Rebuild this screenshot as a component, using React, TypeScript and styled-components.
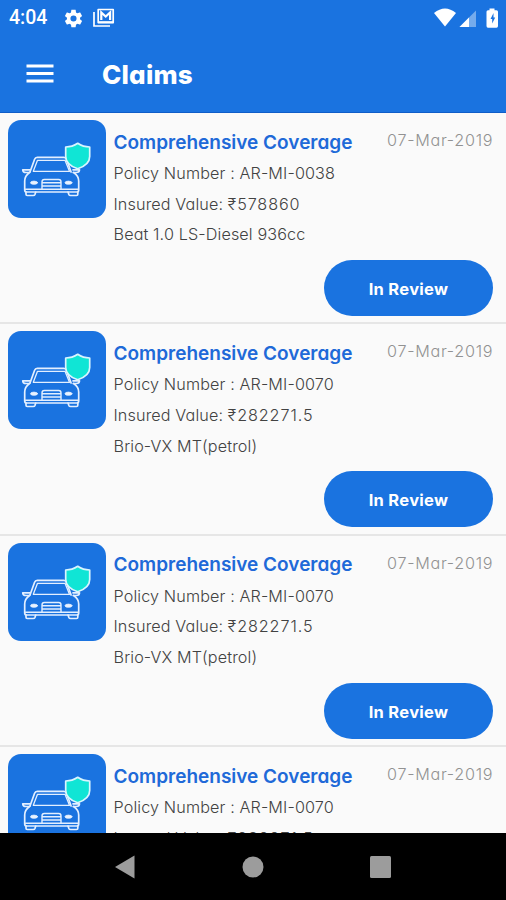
import React from "react";
import styled, { createGlobalStyle } from "styled-components";

const BLUE = "#1a73e0";

const GlobalStyle = createGlobalStyle`
  * { box-sizing: border-box; }
  body { margin: 0; background: #fafafa; }
`;

const Screen = styled.div`
  width: 506px;
  height: 900px;
  display: flex;
  flex-direction: column;
  overflow: hidden;
  background: #fafafa;
  color: #424242;
  font-family: Inter, "Open Sans", sans-serif;
  font-feature-settings: "cv11" 1;
`;

const Header = styled.header`
  flex: none;
  height: 113px;
  background: ${BLUE};
  border-bottom: 1px solid #0f5dc8;
  color: #fff;
`;

const StatusBar = styled.div`
  height: 36px;
  display: flex;
  align-items: center;
  padding: 0 7px 0 9px;
`;

const Clock = styled.span`
  width: 54px;
  font: 500 19.5px/36px Roboto, sans-serif;
`;

const StatusLeft = styled.div`
  display: flex;
  flex: 1;
  gap: 8px;
`;

const StatusRight = styled.div`
  display: flex;
  align-items: center;
`;

const TitleBar = styled.div`
  height: 76px;
  display: flex;
  align-items: center;
  padding-left: 26px;
`;

const MenuButton = styled.button`
  width: 76px;
  height: 22px;
  padding: 0;
  border: 0;
  background: none;
  display: flex;
`;

const PageTitle = styled.h1`
  margin: 2px 0 0;
  font-size: 26px;
  line-height: 34px;
  font-weight: 800;
  letter-spacing: 0.2px;
`;

const List = styled.main`
  flex: 1;
  min-height: 0;
  overflow: hidden;
`;

const Claim = styled.article`
  height: 211.4px;
  display: grid;
  grid-template-columns: 98px 1fr auto;
  grid-template-rows: 140px 56px;
  column-gap: 8px;
  padding: 7px 13px 0 7.5px;
  border-bottom: 2px solid #e6e6e6;
`;

const Badge = styled.div`
  width: 98px;
  height: 98px;
  border-radius: 13px;
  background: ${BLUE};
`;

const Details = styled.div`
  display: flex;
  flex-direction: column;
  padding-top: 7.5px;
  white-space: nowrap;
`;

const Heading = styled.h2`
  margin: 0 0 0.5px;
  font-size: 19px;
  font-weight: 600;
  line-height: 30px;
  color: #2069d8;
`;

const Line = styled.p`
  margin: 0;
  font-size: 16.2px;
  font-weight: 350;
  line-height: 30.7px;
  letter-spacing: 0.12px;
`;

const Amount = styled.span`
  letter-spacing: 0.9px;
`;

const DateText = styled.time`
  padding-top: 5px;
  font-size: 16.2px;
  line-height: 30px;
  font-weight: 350;
  letter-spacing: 0.7px;
  margin-right: -0.2px;
  color: #929292;
`;

const StatusButton = styled.button`
  grid-column: 1 / -1;
  justify-self: end;
  width: 169px;
  height: 56px;
  padding: 2px 0 0;
  border: 0;
  border-radius: 28px;
  background: ${BLUE};
  color: #fff;
  font: inherit;
  font-size: 16.5px;
  font-weight: 650;
  letter-spacing: 0.3px;
`;

const NavBar = styled.nav`
  flex: none;
  height: 67px;
  background: #000;
  display: flex;
  justify-content: center;
  align-items: center;
  gap: 106px;
`;

function CarShield() {
  return (
    <svg width="98" height="98" viewBox="0 0 98 98" fill="none" stroke="#e3efff" strokeWidth="1.7" strokeLinejoin="round" strokeLinecap="round">
      <path d="M22 52l4.600-12.700q.7-2 2.700-2h26.500q2 0 2.700 2l4.600 12.700" />
      <path d="M25.300 51.300l4.200-11h27.500l4.500 11z" strokeWidth="1.300" />
      <path d="M21.500 52.500h-3.500q-3.300 0-3.300-2.700h7.300M65 49.800h6.500q0 2.700-3.300 2.700h-3" />
      <path d="M21.500 52.500q-4.800 3.500-4.800 8.500v9q0 2 2 2h50q2 0 2-2v-9q0-5-5-8.500" />
      <path d="M18 72v2.300q0 1.200 1.200 1.200h6q1.300 0 1.800-1.200l.8-2.300M60 72l.8 2.300q.5 1.200 1.800 1.200h6q1.200 0 1.200-1.200v-2.300" />
      <path d="M34 69v-7q0-2.500 2.300-2.500h14.400q2.300 0 2.300 2.500v7M35 62.700h17M34.500 66h18M17.500 69.300h52.500" strokeWidth="1.400" />
      <ellipse cx="26" cy="62.700" rx="3.500" ry="1.600" fill="#e9f3ff" strokeWidth=".8" />
      <ellipse cx="60.500" cy="62.700" rx="3.500" ry="1.600" fill="#e9f3ff" strokeWidth=".8" />
      <path d="M69.700 23.300q5.500 3.700 12 3.700v9.500q0 8.300-12 12.300-12-4-12-12.300v-9.500q6.500 0 12-3.700z" fill="#10e5d5" stroke="#d9f5ff" />
    </svg>
  );
}

const claims = [
  { policy: "AR-MI-0038", value: "₹578860", car: "Beat 1.0 LS-Diesel 936cc" },
  { policy: "AR-MI-0070", value: "₹282271.5", car: "Brio-VX MT(petrol)" },
  { policy: "AR-MI-0070", value: "₹282271.5", car: "Brio-VX MT(petrol)" },
  { policy: "AR-MI-0070", value: "₹282271.5", car: "Brio-VX MT(petrol)" },
];

export default function App() {
  return (
    <Screen>
      <GlobalStyle />
      <Header>
        <StatusBar>
          <Clock>4:04</Clock>
          <StatusLeft>
            <svg width="21" height="21" viewBox="0 0 24 24" fill="#fff">
              <path d="M19.430 12.980c.04-.32.07-.64.07-.98s-.03-.66-.07-.98l2.110-1.650c.19-.15.24-.42.12-.64l-2-3.460c-.12-.22-.39-.3-.61-.22l-2.490 1c-.52-.4-1.080-.73-1.690-.98l-.38-2.650C14.460 2.180 14.250 2 14 2h-4c-.25 0-.46.18-.49.42l-.38 2.650c-.61.25-1.170.59-1.690.98l-2.490-1c-.23-.09-.49 0-.61.22l-2 3.460c-.13.22-.07.49.12.64l2.110 1.650c-.04.32-.07.65-.07.98s.03.66.07.98l-2.110 1.650c-.19.15-.24.42-.12.64l2 3.460c.12.22.39.3.61.22l2.490-1c.52.4 1.080.73 1.690.98l.38 2.650c.03.24.24.42.49.42h4c.25 0 .46-.18.49-.42l.38-2.650c.61-.25 1.170-.59 1.690-.98l2.490 1c.23.09.49 0 .61-.22l2-3.460c.12-.22.07-.49-.12-.64zM12 15.500A3.500 3.500 0 1 1 12 8.500a3.500 3.500 0 0 1 0 7z" />
            </svg>
            <svg width="24" height="20" viewBox="0 0 24 20" fill="none" stroke="#fff" strokeWidth="1.700">
              <path d="M2 4v14h16" />
              <path d="M6.200 1.500h15v13h-15z" strokeLinejoin="round" />
              <path d="M9.300 12V4.500l4.400 4 4.400-4V12" strokeWidth="2.200" />
              <path d="M6 14.300h15.500" strokeWidth="2.200" />
            </svg>
          </StatusLeft>
          <StatusRight>
            <svg width="65" height="20" viewBox="434 7 65 20">
              <path d="M434 12q11-9 22 0L445 25.500z" fill="#fff" />
              <path d="M476 9.500V26h-16.500z" fill="#fff" opacity=".4" />
              <path d="M469 16.500V26h-9.500z" fill="#fff" />
              <path d="M489.500 7.500h5v1.800h2q1.500 0 1.500 1.500V25q0 1.800-1.500 1.800h-8.500q-1.500 0-1.500-1.800V10.800q0-1.500 1.500-1.500h1.500z" fill="#fff" />
              <path d="M493.500 12l-3 6h1.700v4.500l3-6h-1.700z" fill={BLUE} />
            </svg>
          </StatusRight>
        </StatusBar>
        <TitleBar>
          <MenuButton aria-label="Menu">
            <svg width="28" height="22" viewBox="0 0 28 22" fill="#fff">
              <path d="M.5 1.500h27v3H.5zM.5 9h27v3H.5zM.5 16.500h27v3H.5z" />
            </svg>
          </MenuButton>
          <PageTitle>Claims</PageTitle>
        </TitleBar>
      </Header>
      <List>
        {claims.map((c, i) => (
          <Claim key={i}>
            <Badge><CarShield /></Badge>
            <Details>
              <Heading>Comprehensive Coverage</Heading>
              <Line>Policy Number : {c.policy}</Line>
              <Line>Insured Value: <Amount>{c.value}</Amount></Line>
              <Line>{c.car}</Line>
            </Details>
            <DateText>07-Mar-2019</DateText>
            <StatusButton>In Review</StatusButton>
          </Claim>
        ))}
      </List>
      <NavBar>
        <svg width="22" height="26" viewBox="0 0 22 26"><path d="M1 13L20.500 1.500v23z" fill="#9c9c9c" /></svg>
        <svg width="22" height="22" viewBox="0 0 22 22"><circle cx="11" cy="11" r="10.500" fill="#9c9c9c" /></svg>
        <svg width="22" height="22" viewBox="0 0 22 22"><rect width="21" height="22" rx="1.500" fill="#9c9c9c" /></svg>
      </NavBar>
    </Screen>
  );
}
